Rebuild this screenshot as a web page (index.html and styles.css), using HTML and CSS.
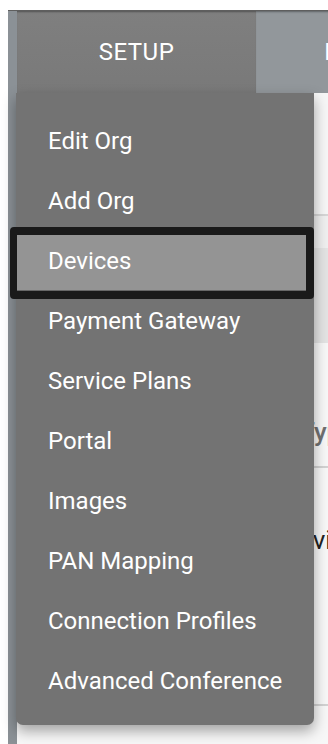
FILE: index.html
```html
<!DOCTYPE html>
<html lang="en">
<head>
<meta charset="utf-8">
<title>Setup menu</title>
<link rel="stylesheet" href="styles.css">
</head>
<body>
<div class="app">
  <div class="rail"></div>
  <div class="main">
    <div class="tabs">
      <div class="tab tab-active">SETUP</div>
      <div class="tab tab-other">MANAGE</div>
    </div>
    <div class="content">
      <div class="toolbar"></div>
      <div class="filter"></div>
      <div class="thead"></div>
      <div class="row row-type"><span class="col-label">Type</span></div>
      <div class="row row-dev"><span class="col-name">Devices</span></div>
    </div>
  </div>
  <ul class="menu">
    <li class="item"><span>Edit Org</span></li>
    <li class="item"><span>Add Org</span></li>
    <li class="item item-active"><span>Devices</span></li>
    <li class="item"><span>Payment Gateway</span></li>
    <li class="item"><span>Service Plans</span></li>
    <li class="item"><span>Portal</span></li>
    <li class="item"><span>Images</span></li>
    <li class="item"><span>PAN Mapping</span></li>
    <li class="item"><span>Connection Profiles</span></li>
    <li class="item"><span>Advanced Conference</span></li>
  </ul>
</div>
</body>
</html>
```
FILE: styles.css
```css
html, body {
  margin: 0;
  padding: 0;
  background: #ffffff;
  height: 744px;
  overflow: hidden;
  font-family: Roboto, "Noto Sans", "Liberation Sans", sans-serif;
}

.app {
  position: relative;
  display: flex;
  margin: 10px 0 0 8px;
  height: 734px;
  box-sizing: border-box;
  border-top: 1px solid #5e5e5e;
}

.rail {
  flex: 0 0 9px;
  background: #8b9196;
}

.main {
  flex: 1;
  min-width: 0;
  overflow: hidden;
  display: flex;
  flex-direction: column;
  background: #f7f7f7;
}

.tabs {
  display: flex;
  flex: 0 0 82px;
}

.tab {
  flex: 0 0 239px;
  display: flex;
  align-items: center;
  justify-content: center;
  color: #ffffff;
  font-size: 24px;
  letter-spacing: 0.5px;
  box-shadow: inset 0 2px 2px -1px rgba(0, 0, 0, 0.35);
}

.tab-active {
  background: linear-gradient(#7f7f7f, #797979);
}

.tab-other {
  background: #92979b;
}

.content {
  flex: 1;
  display: flex;
  flex-direction: column;
  background: #f7f7f7;
}

.toolbar {
  flex: 0 0 121px;
  background: #f6f6f6;
  border-bottom: 2px solid #d6d6d6;
}

.filter {
  flex: 0 0 32px;
  background: #efefef;
}

.thead {
  flex: 0 0 95px;
  background: #e3e3e3;
}

.row {
  display: flex;
  align-items: flex-start;
  border-bottom: 2px solid #d2d2d2;
  font-size: 26px;
}

.row-type {
  flex: 0 0 125px;
  padding: 74px 0 0 282px;
  box-sizing: border-box;
}

.row-dev {
  flex: 0 0 238px;
  box-sizing: border-box;
  padding: 57px 0 0 265px;
}

.col-label {
  color: #707070;
  font-weight: 500;
  line-height: 30px;
}

.col-name {
  color: #222222;
  line-height: 30px;
}

.menu {
  position: absolute;
  left: 8px;
  top: 82px;
  width: 298px;
  margin: 0;
  padding: 18px 0 14px;
  list-style: none;
  background: #737373;
  border-radius: 0 0 7px 7px;
  box-shadow: 0 6px 14px rgba(0, 0, 0, 0.35);
}

.item {
  position: relative;
  height: 60px;
  line-height: 60px;
  padding-left: 32px;
  color: #ffffff;
  font-size: 24px;
  white-space: nowrap;
}

.item span {
  position: relative;
  z-index: 1;
}

.item-active::before {
  content: "";
  position: absolute;
  left: -6px;
  right: 0;
  top: -4px;
  bottom: -8px;
  border: 8px solid #1a1a1a;
  border-left-width: 7px;
  border-radius: 4px;
  background: #949494;
  box-shadow: inset 0 -1px 0 #676767;
  z-index: 0;
}
```
